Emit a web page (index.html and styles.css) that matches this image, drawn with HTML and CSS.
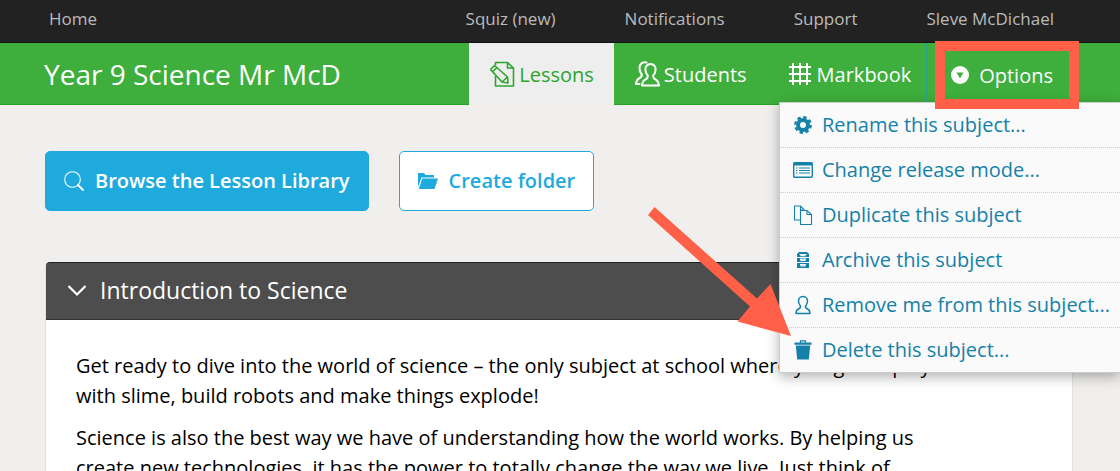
FILE: index.html
```html
<!DOCTYPE html>
<html lang="en">
<head>
<meta charset="utf-8">
<title>Year 9 Science Mr McD</title>
<link rel="stylesheet" href="styles.css">
</head>
<body>
<nav class="topbar" aria-label="Site">
  <a class="topbar-link topbar-home" href="#">Home</a>
  <a class="topbar-link" href="#">Squiz (new)</a>
  <a class="topbar-link" href="#">Notifications</a>
  <a class="topbar-link" href="#">Support</a>
  <a class="topbar-link" href="#">Sleve McDichael</a>
</nav>

<header class="subject">
  <h1 class="subject-title">Year 9 Science Mr McD</h1>
  <nav class="tabs" aria-label="Subject">
    <a class="tab tab-active" href="#">
      <svg class="tab-icon" viewBox="0 0 26 26" fill="none" stroke="currentColor" stroke-width="1.6" stroke-linejoin="round" aria-hidden="true">
        <path d="M6.500 4V1.500h12l6 5.500v18h-18V15M18.500 1.500V7h6"/>
        <path d="M1.500 8.500l4-4 13 11.500.5 6-6-1zM3.800 10.500l4-4M13 21l5.500-5"/>
      </svg>
      Lessons
    </a>
    <a class="tab" href="#">
      <svg class="tab-icon" viewBox="0 0 26 26" fill="none" stroke="currentColor" stroke-width="2" stroke-linejoin="round" stroke-linecap="round" aria-hidden="true">
        <path d="M16.500 3c3.500 0 5.500 3 5 6.500-.3 2.500-1.300 4-2.300 5-.3 2 .5 3 2.300 4 2.500 1 3 3 3.500 6H8c.3-3 1-5 3.500-6 1.800-1 2.600-2 2.300-4-1-1-2-2.500-2.300-5-.5-3.500 1.500-6.500 5-6.500z"/>
        <path d="M12.500 1.500C8.500.5 5.500 3 5.500 7c0 3 1 5 2.300 6.500.2 2-.8 3-2.800 4C3 18.500 2.200 20 2 23h3.500"/>
      </svg>
      Students
    </a>
    <a class="tab" href="#">
      <svg class="tab-icon" viewBox="0 0 26 26" fill="none" stroke="currentColor" stroke-width="2" aria-hidden="true">
        <path d="M6 2v22M13 2v22M20 2v22M2 6h22M2 13h22M2 20h22"/>
      </svg>
      Markbook
    </a>
  </nav>
  <div class="options">
    <button class="options-button" type="button" aria-expanded="true" aria-controls="options-menu">
      <svg class="options-icon" viewBox="0 0 18 18" aria-hidden="true">
        <circle cx="9" cy="9" r="9" fill="#fff"/>
        <path d="M5.500 6.500h7L9 12.500z" fill="#3eae3c"/>
      </svg>
      Options
    </button>
  </div>

  <ul class="menu" id="options-menu">
    <li class="menu-row"><a class="menu-link" href="#">
      <svg class="menu-icon" viewBox="0 0 20 20" fill="none" stroke="currentColor" aria-hidden="true">
        <circle cx="10" cy="10" r="5" stroke-width="4"/>
        <circle cx="10" cy="10" r="7.700" stroke-width="2.400" stroke-dasharray="3.400 2.650"/>
      </svg>
      Rename this subject...</a></li>
    <li class="menu-row"><a class="menu-link" href="#">
      <svg class="menu-icon" viewBox="0 0 20 20" fill="none" stroke="currentColor" aria-hidden="true">
        <rect x=".7" y="2.700" width="18.600" height="14.600" rx="1" stroke-width="1.400"/>
        <path d="M1 4h18" stroke-width="3"/>
        <path d="M6 8h11M6 10.500h11M6 13h11M3 8h1.500M3 10.500h1.500M3 13h1.500" stroke-width="1.200"/>
      </svg>
      Change release mode...</a></li>
    <li class="menu-row"><a class="menu-link" href="#">
      <svg class="menu-icon" viewBox="0 0 20 20" fill="none" stroke="currentColor" stroke-width="1.100" aria-hidden="true">
        <path d="M7 15H1.500V1h6L11 4.500V5.500M7.500 1v4H10"/>
        <path d="M7.500 5.500h6.500l4.500 4v10h-11zM14 5.500v4h4.500"/>
      </svg>
      Duplicate this subject</a></li>
    <li class="menu-row"><a class="menu-link" href="#">
      <svg class="menu-icon" viewBox="0 0 20 20" aria-hidden="true">
        <path fill="currentColor" d="M6 2h8l2 2v3H4V4zM4 8h12v4H4zM4 13h12v5H4z"/>
        <path fill="none" stroke="#fafafa" stroke-width="1.200" d="M6.500 4.500h7M8 4.500v1.200h4V4.500M7 9.200h6M8 9.200v1.300h4V9.200M7 14.500h6M8 14.500v1.300h4v-1.300"/>
      </svg>
      Archive this subject</a></li>
    <li class="menu-row"><a class="menu-link" href="#">
      <svg class="menu-icon" viewBox="0 0 20 20" fill="none" stroke="currentColor" stroke-width="1.500" stroke-linejoin="round" aria-hidden="true">
        <path d="M10 1.500c3 0 4.700 2 4.500 5-.2 2-1 3.500-2 4.500-.2 1.500.3 2.300 2 3 2 .8 2.400 2 2.500 4.500H3c.1-2.500.5-3.700 2.500-4.500 1.700-.7 2.200-1.500 2-3-1-1-1.800-2.500-2-4.500-.2-3 1.500-5 4.500-5z"/>
      </svg>
      Remove me from this subject...</a></li>
    <li class="menu-row"><a class="menu-link" href="#">
      <svg class="menu-icon" viewBox="0 0 20 20" aria-hidden="true">
        <path fill="none" stroke="currentColor" stroke-width="1.200" d="M7.500 3V.8h5V3"/>
        <path fill="currentColor" d="M1.500 2.500h17v2.200h-17zM2.800 5.500h14.400L15.800 19.500H4.200z"/>
      </svg>
      Delete this subject...</a></li>
  </ul>

  <svg class="pointer" viewBox="0 0 143 130" aria-hidden="true">
    <path fill="#ff6047" d="M6.500 0L109 91.500 122.500 77 143 129 89.500 114.500 102 99.500 0 8z"/>
  </svg>
</header>

<main class="page">
  <div class="actions">
    <button class="action action-primary" type="button">
      <svg class="action-icon" viewBox="0 0 20 20" fill="none" stroke="currentColor" stroke-linecap="round" aria-hidden="true">
        <circle cx="8.500" cy="8.500" r="7.800" stroke-width="1.100"/>
        <path d="M14 14l5 5" stroke-width="1.900"/>
      </svg>
      Browse the Lesson Library
    </button>
    <button class="action action-secondary" type="button">
      <svg class="action-icon" viewBox="0 0 20 20" fill="currentColor" aria-hidden="true">
        <path d="M0 2h6l1.500 2H16v2.500H3.500L0 16z"/>
        <path d="M4.200 7.500H20L16.500 18H.8z"/>
      </svg>
      Create folder
    </button>
  </div>

  <section class="lesson">
    <h2 class="lesson-heading">
      <svg class="lesson-icon" viewBox="0 0 20 20" fill="none" stroke="currentColor" stroke-width="2.200" aria-hidden="true">
        <path d="M1.500 6l8.500 8.500L18.500 6"/>
      </svg>
      Introduction to Science
    </h2>
    <div class="lesson-body">
      <p class="lesson-text">Get ready to dive into the world of science – the only subject at school where you get to play with slime, build robots and make things explode!</p>
      <p class="lesson-text">Science is also the best way we have of understanding how the world works. By helping us create new technologies, it has the power to totally change the way we live. Just think of</p>
    </div>
  </section>
</main>
</body>
</html>
```
FILE: styles.css
```css
* {
  box-sizing: border-box;
}

body {
  margin: 0;
  background: #f0efed;
  color: #000;
  font-family: "Open Sans", "Noto Sans", sans-serif;
  font-size: 20px;
  overflow: hidden;
}

.topbar {
  display: flex;
  gap: 69px;
  padding: 7px 66px 11px 49px;
  border-bottom: 1px solid #111;
  background: #222;
}

.topbar-link {
  color: #bbb;
  font-size: 17px;
  line-height: 24px;
  text-decoration: none;
}

.topbar-home {
  margin-right: auto;
}

.subject {
  position: relative;
  display: flex;
  min-height: 62px;
  padding: 0 41px 0 44px;
  background: #3eae3c;
  box-shadow: inset 0 -1px #25a323;
  color: #fff;
}

.subject-title {
  align-self: center;
  margin: 0 auto 0 0;
  font-size: 28px;
  font-weight: 400;
  line-height: 36px;
}

.tabs {
  display: flex;
  border-right: 2px solid #2aa58c;
}

.tab {
  display: flex;
  align-items: center;
  gap: 4px;
  padding: 0 20px;
  color: #fff;
  text-decoration: none;
}

.tab:last-child {
  padding-right: 15px;
}

.tab-active {
  background: #eee;
  color: #2ba52b;
}

.tab-icon {
  width: 26px;
  height: 26px;
}

.options {
  position: relative;
  display: flex;
  margin-left: 7px;
}

.options::after {
  content: "";
  position: absolute;
  z-index: 3;
  inset: -2px 0 -4px;
  border: 10px solid #ff6047;
  pointer-events: none;
}

.options-button {
  display: flex;
  align-items: center;
  gap: 10px;
  padding: 2px 26px 0 16px;
  border: 0;
  background: none;
  color: #fff;
  font: inherit;
}

.options-icon {
  width: 18px;
  height: 18px;
}

.menu {
  position: absolute;
  z-index: 2;
  top: 59px;
  right: 0;
  width: 341px;
  margin: 0;
  padding: 0;
  border: solid #ccc;
  border-width: 1px 0 1px 1px;
  background: #fafafa;
  box-shadow: 0 4px 12px rgba(0, 0, 0, 0.3);
  list-style: none;
}

.menu-row + .menu-row {
  border-top: 1px dotted #ccc;
}

.menu-link {
  display: flex;
  align-items: center;
  gap: 9px;
  padding: 0 8px 0 13px;
  color: #1581a8;
  line-height: 44px;
  text-decoration: none;
  white-space: nowrap;
}

.menu-icon {
  width: 20px;
  height: 20px;
}

.pointer {
  position: absolute;
  z-index: 3;
  top: 164px;
  right: 329px;
  width: 143px;
  height: 130px;
  pointer-events: none;
}

.page {
  padding: 46px 47px 0 45px;
}

.actions {
  display: flex;
  gap: 30px;
}

.action {
  display: flex;
  align-items: center;
  gap: 11px;
  padding: 15px 18px;
  border: 1px solid #1eaadc;
  border-radius: 5px;
  font: inherit;
  font-weight: 600;
  line-height: 28px;
}

.action-primary {
  background: #1eaadc;
  color: #fff;
}

.action-secondary {
  background: #fff;
  color: #1eaadc;
}

.action-icon {
  width: 20px;
  height: 20px;
}

.lesson {
  margin-top: 51px;
  border: 1px solid #e2e2e2;
  border-top: 0;
  border-radius: 4px 4px 0 0;
  background: #fff;
}

.lesson-heading {
  display: flex;
  align-items: center;
  gap: 13px;
  margin: 0;
  padding: 12px 21px 14px;
  border-top: 1px solid #222;
  border-bottom: 1px solid #333;
  border-radius: 4px 4px 0 0;
  background: #4d4d4d;
  color: #fff;
  font-size: 23px;
  font-weight: 400;
  line-height: 30px;
}

.lesson-icon {
  width: 20px;
  height: 20px;
}

.lesson-body {
  max-width: 920px;
  padding: 31px 30px;
}

.lesson-text {
  margin: 0 0 12px;
  line-height: 30px;
}
```
